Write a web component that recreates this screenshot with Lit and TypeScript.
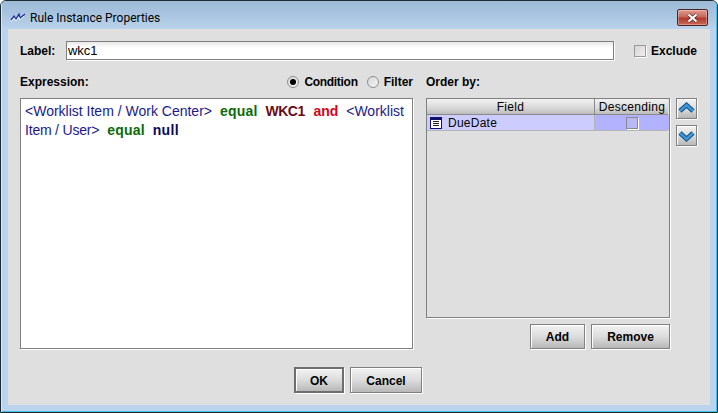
import { LitElement, html, css, svg, TemplateResult } from "lit";
import { customElement, property } from "lit/decorators.js";

@customElement("app-root")
export class AppRoot extends LitElement {
  @property() label = "wkc1";

  static styles = css`
    :host {
      display: block;
      width: 718px;
      height: 413px;
      font-family: "Liberation Sans", Arial, sans-serif;
      font-size: 12px;
      color: #000;
      background: #fff;
    }

    .window {
      box-sizing: border-box;
      height: 413px;
      display: flex;
      flex-direction: column;
      border: 1px solid #1c2a33;
      border-radius: 6px 6px 0 0;
      background: #bbd3ec;
      box-shadow: inset 1px 0 0 #dbe8f4, inset -1px -1px 0 #3cc4ea;
      overflow: hidden;
    }

    .titlebar {
      flex: none;
      box-sizing: border-box;
      height: 28px;
      display: flex;
      align-items: center;
      padding: 5px 9px 0 9px;
      gap: 4px;
      background: linear-gradient(180deg, #9dbad7 0%, #a9c5e0 50%, #bbd3ec 100%);
      box-shadow: inset 1px 0 0 #dbe8f4, inset -1px 0 0 #3cc4ea;
      font-family: Roboto, sans-serif;
      font-size: 12px;
      color: #000;
    }

    .title {
      flex: 1;
    }

    .close {
      width: 31px;
      height: 17px;
      box-sizing: border-box;
      border: 1px solid #4e2420;
      border-radius: 2px;
      background: linear-gradient(180deg, #dd9a90 0%, #c9675c 45%, #b23a2e 55%, #c96a5a 100%);
      display: flex;
      align-items: center;
      justify-content: center;
      box-shadow: inset 0 0 0 1px rgba(255, 255, 255, 0.3);
    }

    .panel {
      flex: 1;
      margin: 0 7px 7px 7px;
      padding: 12px 13px 0 12px;
      background: #dfdfdf;
      display: flex;
      flex-direction: column;
      min-height: 0;
    }

    .b {
      font-weight: bold;
    }

    .label-row {
      display: flex;
      align-items: center;
      height: 19px;
    }

    .label-row .b.name {
      width: 46px;
    }

    .field {
      box-sizing: border-box;
      flex: none;
      width: 548px;
      height: 19px;
      border: 1px solid #808080;
      box-shadow: 1px 1px 0 #fff;
      outline: none;
      padding: 0 1px;
      font: 13px "Liberation Sans", Arial, sans-serif;
      background: linear-gradient(180deg, #e8e8e8 0%, #ffffff 35%, #ffffff 100%);
    }

    .exclude {
      display: flex;
      align-items: center;
      gap: 5px;
      margin-left: 20px;
    }

    .check {
      box-sizing: border-box;
      width: 12px;
      height: 12px;
      border: 1px solid #9a9a9a;
      box-shadow: 1px 1px 0 #fff;
      background: linear-gradient(135deg, #d6d6d6, #eeeeee);
    }

    .main {
      display: flex;
      margin-top: 13px;
    }

    .left {
      flex: none;
      width: 393px;
      margin-right: 13px;
    }

    .head {
      display: flex;
      align-items: center;
      height: 17px;
      margin-bottom: 8px;
    }

    .head .grow {
      flex: 1;
    }

    .radio {
      display: flex;
      align-items: center;
      gap: 5px;
      margin-left: 9px;
    }

    .tight {
      letter-spacing: -0.3px;
    }

    .radio-dot {
      box-sizing: border-box;
      width: 12px;
      height: 12px;
      border-radius: 50%;
      border: 1px solid #8e8e8e;
      background: linear-gradient(135deg, #d8d8d8, #f4f4f4);
      display: flex;
      align-items: center;
      justify-content: center;
    }

    .radio-dot.on::after {
      content: "";
      width: 6px;
      height: 6px;
      border-radius: 50%;
      background: #000;
    }

    .expr {
      box-sizing: border-box;
      height: 251px;
      padding: 3px 4px;
      background: #fff;
      border: 1px solid #808080;
      box-shadow: 1px 1px 0 #fff;
      font-size: 14px;
      line-height: 19px;
    }

    .path {
      color: #1a1a8c;
    }

    .path.short {
      letter-spacing: -0.2px;
    }

    .op,
    .val,
    .kw,
    .nil {
      font-weight: bold;
    }

    .op {
      color: #0b6b0b;
      letter-spacing: 0.2px;
    }

    .val {
      color: #6b0b16;
      letter-spacing: -0.5px;
    }

    .kw {
      color: #d0071e;
      margin-left: 1px;
    }

    .nil {
      color: #0a0a5c;
      letter-spacing: 0.3px;
    }

    .right {
      flex: none;
      width: 244px;
      display: flex;
      flex-direction: column;
    }

    .table {
      box-sizing: border-box;
      height: 220px;
      border: 1px solid #808080;
      box-shadow: 1px 1px 0 #fff;
      padding-right: 1px;
    }

    .thead {
      display: grid;
      grid-template-columns: 167px 75px;
      height: 15px;
      border-bottom: 1px solid #8a8a8a;
      background: linear-gradient(180deg, #f2f2f2 0%, #d8d8d8 60%, #bcbcbc 100%);
      text-align: center;
      line-height: 16px;
      letter-spacing: 0.3px;
    }

    .thead div + div {
      border-left: 1px solid #8a8a8a;
    }

    .trow {
      display: grid;
      grid-template-columns: 167px 75px;
      height: 15px;
      border-bottom: 1px solid #b4b4b4;
    }

    .cell-name {
      background: #ccccff;
      display: flex;
      align-items: center;
      gap: 6px;
      padding-left: 3px;
      letter-spacing: 0.25px;
    }

    .cell-check {
      background: #b2b2ff;
      border-left: 1px solid #b4b4b4;
      display: flex;
      align-items: center;
      justify-content: center;
    }

    .cell-check .check {
      background: #b8b8f4;
      border-color: #8a8a8a;
      box-shadow: 1px 1px 0 #fff;
    }

    .actions {
      display: flex;
      justify-content: flex-end;
      gap: 6px;
      margin-top: 6px;
    }

    .btn {
      box-sizing: border-box;
      height: 25px;
      padding-top: 1px;
      border: 1px solid #808080;
      box-shadow: 1px 1px 0 #fff, inset 1px 1px 0 #fff;
      background: linear-gradient(180deg, #f2f2f2 0%, #dcdcdc 50%, #b8b8b8 100%);
      display: flex;
      align-items: center;
      justify-content: center;
      font-weight: bold;
    }

    .order {
      display: flex;
      flex-direction: column;
      gap: 6px;
      margin: 25px 0 0 6px;
    }

    .order .btn {
      width: 21px;
      height: 21px;
      padding-top: 0;
    }

    .footer {
      display: flex;
      justify-content: flex-start;
      gap: 6px;
      margin: 18px 0 0 274px;
    }

    .ok {
      width: 50px;
      height: 26px;
      border: 2px solid #6e6e6e;
    }

    .cancel {
      width: 72px;
      height: 26px;
    }
  `;

  private chevron(up: boolean): TemplateResult {
    const d = up ? "M2 10 L8.5 4 L15 10" : "M2 5 L8.5 11 L15 5";
    return html`<svg width="17" height="15" viewBox="0 0 17 15">
      ${svg`<path d=${d} fill="none" stroke="#0e4f86" stroke-width="4.5" stroke-linejoin="miter" />
      <path d=${d} fill="none" stroke="#3f95d6" stroke-width="2.4" />`}
    </svg>`;
  }

  private rowIcon(): TemplateResult {
    return html`<svg width="12" height="12" viewBox="0 0 12 12">
      <rect x="0.5" y="0.5" width="11" height="11" fill="#fff" stroke="#10106e" />
      <rect x="1" y="1" width="10" height="2" fill="#10106e" />
      <path d="M3 4.5H9M3 6.5H9M3 8.5H9" stroke="#222" stroke-width="1" />
    </svg>`;
  }

  protected render(): TemplateResult {
    return html`
      <div class="window">
        <div class="titlebar">
          <svg width="16" height="10" viewBox="0 0 16 10">
            <path d="M1 7 L4 3 L6 6 L9 1 L10 5 L15 1" fill="none" stroke="#23339a" stroke-width="1.3" />
            <path d="M1 9 L4 5 L6 8 L9 4 L10 7 L14 3" fill="none" stroke="#fff" stroke-width="0.8" />
          </svg>
          <span class="title">Rule Instance Properties</span>
          <div class="close">
            <svg width="13" height="10" viewBox="0 0 13 10">
              <path d="M2.5 1.5 L10.5 8.5 M10.5 1.5 L2.5 8.5" stroke="#5a2a26" stroke-width="3.6" />
              <path d="M2.5 1.5 L10.5 8.5 M10.5 1.5 L2.5 8.5" stroke="#fff" stroke-width="2.2" />
            </svg>
          </div>
        </div>
        <div class="panel">
          <div class="label-row">
            <span class="b name">Label:</span>
            <input class="field" .value=${this.label} />
            <div class="exclude">
              <div class="check"></div>
              <span class="b">Exclude</span>
            </div>
          </div>
          <div class="main">
            <div class="left">
              <div class="head">
                <span class="b">Expression:</span>
                <span class="grow"></span>
                <div class="radio"><div class="radio-dot on"></div><span class="b tight">Condition</span></div>
                <div class="radio"><div class="radio-dot"></div><span class="b">Filter</span></div>
              </div>
              <div class="expr">
                <span class="path">&lt;Worklist Item / Work Center&gt;</span>
                <span class="op">&nbsp;equal&nbsp;</span>
                <span class="val">WKC1</span>
                <span class="kw">&nbsp;and&nbsp;</span>
                <span class="path">&lt;Worklist</span>
                <span class="path short">Item / User&gt;</span>
                <span class="op">&nbsp;equal&nbsp;</span>
                <span class="nil">null</span>
              </div>
            </div>
            <div class="right">
              <div class="head"><span class="b">Order by:</span></div>
              <div class="table">
                <div class="thead"><div>Field</div><div>Descending</div></div>
                <div class="trow">
                  <div class="cell-name">${this.rowIcon()}<span>DueDate</span></div>
                  <div class="cell-check"><div class="check"></div></div>
                </div>
              </div>
              <div class="actions">
                <div class="btn" style="width:55px">Add</div>
                <div class="btn" style="width:79px">Remove</div>
              </div>
            </div>
            <div class="order">
              <div class="btn">${this.chevron(true)}</div>
              <div class="btn">${this.chevron(false)}</div>
            </div>
          </div>
          <div class="footer">
            <div class="btn ok">OK</div>
            <div class="btn cancel">Cancel</div>
          </div>
        </div>
      </div>
    `;
  }
}

declare global {
  interface HTMLElementTagNameMap {
    "app-root": AppRoot;
  }
}
